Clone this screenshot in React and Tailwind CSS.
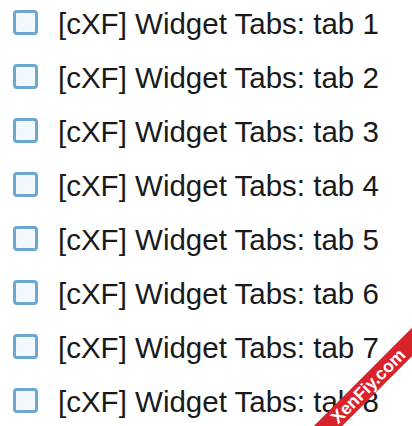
export default function App() {
  const tabs = [1, 2, 3, 4, 5, 6, 7, 8];
  return (
    <div className="relative w-[412px] h-[426px] overflow-hidden bg-white">
      <div className="flex flex-col gap-[29px] pt-[10px] pl-[13px]">
        {tabs.map((n) => (
          <div key={n} className="flex items-center h-[25px]">
            <div className="w-[25px] h-[25px] shrink-0 rounded-[4px] border-[3px] border-[#6ba7d1] bg-[#f3f8fc]" />
            <span
              className="ml-[20px] text-[29.5px] leading-none text-[#1a1a1a] whitespace-nowrap relative top-[1px]"
              style={{ fontFamily: '"Liberation Sans", Arial, sans-serif' }}
            >
              [cXF] Widget Tabs: tab {n}
            </span>
          </div>
        ))}
      </div>
      <div
        className="absolute left-[218px] top-[376px] w-[300px] h-[20px] bg-[#d8232b] text-white font-bold text-[17.5px] leading-[20px] text-center -rotate-45 pointer-events-none"
        style={{ fontFamily: '"Liberation Sans", Arial, sans-serif' }}
      >
        XenFiy.com
      </div>
    </div>
  );
}
